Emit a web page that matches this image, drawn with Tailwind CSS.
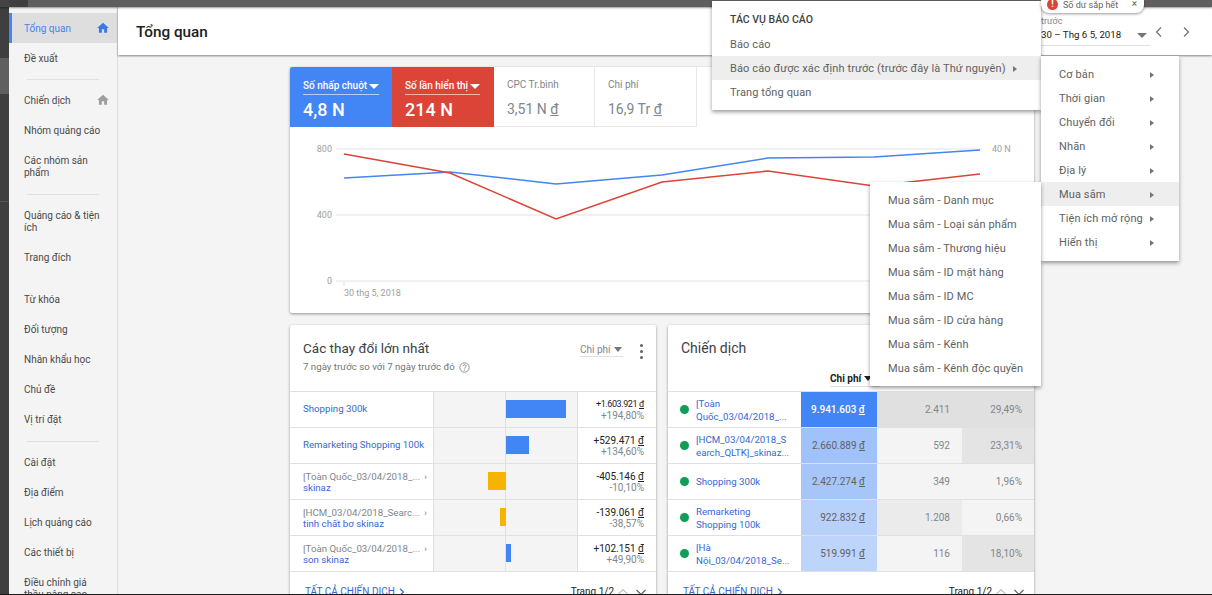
<!doctype html>
<html lang="vi">
<head>
<meta charset="utf-8">
<script src="https://cdn.jsdelivr.net/npm/@tailwindcss/browser@4"></script>
<title>Tổng quan</title>
</head>
<body class="m-0">
<div class="relative w-[1212px] h-[595px] overflow-hidden flex flex-col bg-[#f4f4f4] font-['Roboto',sans-serif] text-[10px] text-[#5f6368]">

  <!-- dark top bar -->
  <div class="h-[7px] shrink-0 flex bg-[#5f5f5f] shadow-[0_1px_2px_rgba(0,0,0,0.4)] z-10">
    <div class="w-[9px] bg-[#444444]"></div>
    <div class="w-[19px] bg-[#3f3f3f]"></div>
  </div>

  <div class="flex flex-1 min-h-0">
    <!-- dark left strip -->
    <div class="w-[9px] shrink-0 bg-[#3f3f3f] flex flex-col">
      <div class="h-[51px]"></div>
      <div class="h-[36px] bg-[#606060]"></div>
      <div class="h-[108px] border-b border-[#555555]"></div>
    </div>

    <!-- nav -->
    <nav class="w-[109px] shrink-0 bg-[#f4f4f4] border-r border-[#dcdcdc] pt-[6px] text-[#4a4a4a] leading-[12px]">
      <div class="h-[30px] flex items-center justify-between pl-[12px] pr-[7px] pt-[2px] bg-[#dedede] border-l-[3px] border-[#4285f4] text-[#4285f4]">
        <span>Tổng quan</span>
        <svg class="w-[14px] h-[14px] -mt-[3px]" viewBox="0 0 24 24" fill="#3b78e7"><path d="M10 20v-6h4v6h5v-8h3L12 3 2 12h3v8z"/></svg>
      </div>
      <div class="h-[30px] flex items-center pl-[15px] pt-[2px]">Đề xuất</div>
      <div class="h-px bg-[#e0e0e0] mt-[6px] mb-[5px] ml-[18px] mr-[18px]"></div>
      <div class="h-[30px] flex items-center justify-between pl-[15px] pr-[7px] pt-[2px]">
        <span>Chiến dịch</span>
        <svg class="w-[14px] h-[14px] -mt-[3px]" viewBox="0 0 24 24" fill="#9e9e9e"><path d="M10 20v-6h4v6h5v-8h3L12 3 2 12h3v8z"/></svg>
      </div>
      <div class="h-[30px] flex items-center pl-[15px] pt-[2px]">Nhóm quảng cáo</div>
      <div class="h-[42px] flex items-center pl-[15px] pt-[2px]">Các nhóm sản<br>phẩm</div>
      <div class="h-px bg-[#e0e0e0] mt-[7px] mb-[5px] ml-[18px] mr-[18px]"></div>
      <div class="h-[42px] flex items-center pl-[15px] pt-[2px]">Quảng cáo &amp; tiện<br>ích</div>
      <div class="h-[30px] flex items-center pl-[15px] pt-[2px] mb-[12px]">Trang đích</div>
      <div class="h-[30px] flex items-center pl-[15px] pt-[2px]">Từ khóa</div>
      <div class="h-[30px] flex items-center pl-[15px] pt-[2px]">Đối tượng</div>
      <div class="h-[30px] flex items-center pl-[15px] pt-[2px]">Nhân khẩu học</div>
      <div class="h-[30px] flex items-center pl-[15px] pt-[2px]">Chủ đề</div>
      <div class="h-[30px] flex items-center pl-[15px] pt-[2px]">Vị trí đặt</div>
      <div class="h-px bg-[#e0e0e0] mt-[7px] mb-[5px] ml-[18px] mr-[18px]"></div>
      <div class="h-[30px] flex items-center pl-[15px] pt-[2px]">Cài đặt</div>
      <div class="h-[30px] flex items-center pl-[15px] pt-[2px]">Địa điểm</div>
      <div class="h-[30px] flex items-center pl-[15px] pt-[2px]">Lịch quảng cáo</div>
      <div class="h-[30px] flex items-center pl-[15px] pt-[2px]">Các thiết bị</div>
      <div class="h-[42px] flex items-center pl-[15px] pt-[2px]">Điều chỉnh giá<br>thầu nâng cao</div>
    </nav>

    <!-- main -->
    <main class="flex-1 min-w-0 flex flex-col">
      <header class="h-[48px] shrink-0 bg-white shadow-[0_1px_2px_rgba(0,0,0,0.45)] flex items-center justify-between pl-[18px] pt-[2px] relative">
        <h1 class="text-[15.3px] font-medium text-[#212121]">Tổng quan</h1>
        <div class="flex items-center self-start pt-[6px] pr-[19px]">
          <div class="w-[109px] h-[31px] border-b border-[#e0e0e0]">
            <div class="text-[9px] leading-[12px] text-[#80868b]">trước</div>
            <div class="flex items-center justify-between leading-[14px] mt-[1px] text-[9.7px] text-[#212121]">
              <span>30 – Thg 6 5, 2018</span>
              <span class="w-0 h-0 border-x-[5px] border-x-transparent border-t-[5px] border-t-[#757575] mr-[3px]"></span>
            </div>
          </div>
          <svg class="w-[14px] h-[14px] ml-[2px] mt-[2px]" viewBox="0 0 14 14" fill="none" stroke="#757575" stroke-width="1.3"><path d="M9 2.5 4.5 7 9 11.5"/></svg>
          <svg class="w-[14px] h-[14px] ml-[13px] mt-[2px]" viewBox="0 0 14 14" fill="none" stroke="#757575" stroke-width="1.3"><path d="M5 2.5 9.500 7 5 11.500"/></svg>
        </div>
      </header>

      <div class="pl-[172px] pt-[12px] w-[916px]">
        <!-- overview card -->
        <section class="w-[744px] h-[246px] bg-white rounded-[2px] shadow-[0_1px_3px_rgba(0,0,0,0.4)] overflow-hidden">
          <div class="flex h-[60px]">
            <div class="w-[102px] bg-[#4285f4] text-white pl-[13px] pt-[11px]">
              <div class="inline-flex items-center gap-[2px] border-b border-white/60 leading-[14px] pb-[1px] font-medium">Số nhấp chuột<span class="w-0 h-0 border-x-[5px] border-x-transparent border-t-[5px] border-t-white"></span></div>
              <div class="text-[18px] leading-[24px] mt-[3px] font-medium">4,8 N</div>
            </div>
            <div class="w-[102px] bg-[#db4437] text-white pl-[13px] pt-[11px]">
              <div class="inline-flex items-center gap-[2px] border-b border-white/60 leading-[14px] pb-[1px] font-medium">Số lần hiển thị<span class="w-0 h-0 border-x-[5px] border-x-transparent border-t-[5px] border-t-white"></span></div>
              <div class="text-[18px] leading-[24px] mt-[3px] font-medium">214 N</div>
            </div>
            <div class="w-[101px] border-r border-b border-[#e8e8e8] pl-[13px] pt-[11px] text-[#80868b]">
              <div class="leading-[14px] pb-[1px]">CPC Tr.bình</div>
              <div class="text-[14px] leading-[24px] mt-[4px]">3,51 N <span class="underline">đ</span></div>
            </div>
            <div class="w-[102px] border-r border-b border-[#e8e8e8] pl-[13px] pt-[11px] text-[#80868b]">
              <div class="leading-[14px] pb-[1px]">Chi phí</div>
              <div class="text-[14px] leading-[24px] mt-[4px]">16,9 Tr <span class="underline">đ</span></div>
            </div>
          </div>
          <svg class="block" width="744" height="186" viewBox="290 127 744 186">
            <g stroke="#f1f1f1" stroke-width="2">
              <line x1="336" y1="149" x2="982" y2="149"/>
              <line x1="336" y1="215" x2="982" y2="215"/>
              <line x1="336" y1="281" x2="982" y2="281"/>
              <line x1="344" y1="281" x2="344" y2="286"/>
            </g>
            <g fill="#9e9e9e" font-size="9" font-family="Roboto, sans-serif">
              <text x="332" y="152" text-anchor="end">800</text>
              <text x="332" y="218" text-anchor="end">400</text>
              <text x="332" y="284" text-anchor="end">0</text>
              <text x="992" y="152">40 N</text>
              <text x="344" y="296">30 thg 5, 2018</text>
            </g>
            <polyline fill="none" stroke="#4285f4" stroke-width="1.5" points="344,178 450,172 556,184 662,175 768,158 874,157 980,150"/>
            <polyline fill="none" stroke="#db4437" stroke-width="1.5" points="344,154 450,173 556,219 662,182 768,171 874,186 980,174"/>
          </svg>
        </section>

        <div class="flex gap-[12px] mt-[12px]">
          <!-- biggest changes -->
          <section class="w-[366px] h-[300px] shrink-0 bg-white rounded-[2px] shadow-[0_1px_3px_rgba(0,0,0,0.4)]">
            <div class="h-[66px] pl-[13px] pr-[11px] pt-[14px] flex justify-between">
              <div>
                <div class="text-[13.5px] leading-[18px] text-[#3c4043]">Các thay đổi lớn nhất</div>
                <div class="mt-[2px] leading-[16px] text-[9.7px] text-[#757575] flex items-center gap-[4px]">7 ngày trước so với 7 ngày trước đó
                  <svg class="w-[11px] h-[11px]" viewBox="0 0 11 11" fill="none" stroke="#757575"><circle cx="5.500" cy="5.500" r="4.700" stroke-width=".8"/><path d="M4 4.200c.2-2 3.200-2 3.200-.1 0 1-1.600 1.200-1.600 2.500" stroke-width=".8"/><circle cx="5.600" cy="8.100" r=".3" stroke-width=".6"/></svg>
                </div>
              </div>
              <div class="flex items-start gap-[17px] pt-[4px]">
                <div class="flex items-center gap-[3px] h-[14px] w-[43px] border-b border-[#e0e0e0] text-[#80868b]">Chi phí<span class="w-0 h-0 border-x-[4px] border-x-transparent border-t-[5px] border-t-[#757575]"></span></div>
                <div class="flex flex-col gap-[3px] pt-[1px] pr-[2px]">
                  <span class="w-[3px] h-[3px] rounded-full bg-[#616161]"></span>
                  <span class="w-[3px] h-[3px] rounded-full bg-[#616161]"></span>
                  <span class="w-[3px] h-[3px] rounded-full bg-[#616161]"></span>
                </div>
              </div>
            </div>
            <!-- rows -->
            <div class="flex h-[36px] border-t border-[#e0e0e0]">
              <div class="w-[143px] flex items-center pl-[13px] text-[9.7px] text-[#3367d6]">Shopping 300k</div>
              <div class="w-[145px] bg-[#f4f4f4] border-x border-[#e0e0e0] flex"><div class="w-[72px] h-full border-r border-[#e0e0e0]"></div><div class="w-[60px] h-[18px] mt-[8px] bg-[#4285f4]"></div></div>
              <div class="w-[78px] flex flex-col justify-center items-end pr-[12px] leading-[11px]"><span class="text-[9px] tracking-[-0.4px] text-[#212121]">+1.603.921 <span class="underline">đ</span></span><span class="text-[#80868b]">+194,80%</span></div>
            </div>
            <div class="flex h-[36px] border-t border-[#e0e0e0]">
              <div class="w-[143px] flex items-center pl-[13px] text-[9.7px] whitespace-nowrap text-[#3367d6]">Remarketing Shopping 100k</div>
              <div class="w-[145px] bg-[#f4f4f4] border-x border-[#e0e0e0] flex"><div class="w-[72px] h-full border-r border-[#e0e0e0]"></div><div class="w-[23px] h-[18px] mt-[8px] bg-[#4285f4]"></div></div>
              <div class="w-[78px] flex flex-col justify-center items-end pr-[12px] leading-[11px]"><span class="text-[#212121]">+529.471 <span class="underline">đ</span></span><span class="text-[#80868b]">+134,60%</span></div>
            </div>
            <div class="flex h-[36px] border-t border-[#e0e0e0]">
              <div class="w-[143px] flex flex-col justify-center pl-[13px] text-[9.7px] leading-[11px] whitespace-nowrap text-[#3367d6]"><div class="flex justify-between pr-[6px] text-[#80868b]"><span>[Toàn Quốc_03/04/2018_...</span><span>›</span></div><span>skinaz</span></div>
              <div class="w-[145px] bg-[#f4f4f4] border-x border-[#e0e0e0] flex justify-start"><div class="w-[72px] h-full border-r border-[#e0e0e0] flex justify-end"><div class="w-[18px] h-[18px] mt-[8px] -mr-px bg-[#f4b400]"></div></div></div>
              <div class="w-[78px] flex flex-col justify-center items-end pr-[12px] leading-[11px]"><span class="text-[#212121]">-405.146 <span class="underline">đ</span></span><span class="text-[#80868b]">-10,10%</span></div>
            </div>
            <div class="flex h-[36px] border-t border-[#e0e0e0]">
              <div class="w-[143px] flex flex-col justify-center pl-[13px] text-[9.7px] leading-[11px] whitespace-nowrap text-[#3367d6]"><div class="flex justify-between pr-[6px] text-[#80868b]"><span>[HCM_03/04/2018_Searc...</span><span>›</span></div><span>tinh chất bơ skinaz</span></div>
              <div class="w-[145px] bg-[#f4f4f4] border-x border-[#e0e0e0] flex"><div class="w-[72px] h-full border-r border-[#e0e0e0] flex justify-end"><div class="w-[6px] h-[18px] mt-[8px] -mr-px bg-[#f4b400]"></div></div></div>
              <div class="w-[78px] flex flex-col justify-center items-end pr-[12px] leading-[11px]"><span class="text-[#212121]">-139.061 <span class="underline">đ</span></span><span class="text-[#80868b]">-38,57%</span></div>
            </div>
            <div class="flex h-[36px] border-t border-[#e0e0e0]">
              <div class="w-[143px] flex flex-col justify-center pl-[13px] text-[9.7px] leading-[11px] whitespace-nowrap text-[#3367d6]"><div class="flex justify-between pr-[6px] text-[#80868b]"><span>[Toàn Quốc_03/04/2018_...</span><span>›</span></div><span>son skinaz</span></div>
              <div class="w-[145px] bg-[#f4f4f4] border-x border-[#e0e0e0] flex"><div class="w-[72px] h-full border-r border-[#e0e0e0]"></div><div class="w-[5px] h-[18px] mt-[8px] bg-[#4285f4]"></div></div>
              <div class="w-[78px] flex flex-col justify-center items-end pr-[12px] leading-[11px]"><span class="text-[#212121]">+102.151 <span class="underline">đ</span></span><span class="text-[#80868b]">+49,90%</span></div>
            </div>
            <div class="flex items-start justify-between h-[36px] border-t border-[#e0e0e0] pl-[15px] pr-[9px] pt-[12px]">
              <div class="flex items-center gap-[3px] text-[#3367d6]"><span>TẤT CẢ CHIẾN DỊCH</span><svg class="w-[8px] h-[8px]" viewBox="0 0 8 8" fill="none" stroke="#3367d6" stroke-width="1.200"><path d="M2 .8 5.500 4 2 7.200"/></svg></div>
              <div class="flex items-center text-[#212121]"><span>Trang 1/2</span><svg class="w-[12px] h-[12px] ml-[3px]" viewBox="0 0 12 12" fill="none" stroke="#c4c4c4" stroke-width="1.200"><path d="M1.500 8 6 3.500 10.500 8"/></svg><svg class="w-[12px] h-[12px] ml-[6px]" viewBox="0 0 12 12" fill="none" stroke="#616161" stroke-width="1.200"><path d="M1.500 4 6 8.500 10.500 4"/></svg></div>
            </div>
          </section>

          <!-- campaigns -->
          <section class="w-[366px] h-[300px] shrink-0 bg-white rounded-[2px] shadow-[0_1px_3px_rgba(0,0,0,0.4)]">
            <div class="h-[66px] pl-[13px] pt-[14px] relative">
              <div class="text-[14px] leading-[18px] text-[#3c4043]">Chiến dịch</div>
              <div class="flex items-center gap-[3px] mt-[14px] ml-[149px] w-[50px] h-[16px] border-b border-[#e0e0e0] text-[#212121] font-bold">Chi phí<span class="w-0 h-0 border-x-[4px] border-x-transparent border-t-[5px] border-t-[#212121]"></span></div>
            </div>
            <div class="flex h-[36px] border-t border-[#e0e0e0]">
              <div class="w-[133px] flex items-center pl-[12px] gap-[7px] text-[9.7px] leading-[13px] whitespace-nowrap text-[#3367d6]"><span class="w-[9px] h-[9px] rounded-full bg-[#0f9d58] shrink-0"></span><span>[Toàn<br>Quốc_03/04/2018_...</span></div>
              <div class="w-[76px] flex items-center justify-end pr-[12px] bg-[#4285f4] text-white font-medium">9.941.603&nbsp;<span class="underline">đ</span></div>
              <div class="w-[85px] flex items-center justify-end pr-[12px] bg-[#e0e0e0] text-[#80868b]">2.411</div>
              <div class="w-[72px] flex items-center justify-end pr-[12px] bg-[#e0e0e0] text-[#80868b]">29,49%</div>
            </div>
            <div class="flex h-[36px] border-t border-[#e0e0e0]">
              <div class="w-[133px] flex items-center pl-[12px] gap-[7px] text-[9.7px] leading-[13px] whitespace-nowrap text-[#3367d6]"><span class="w-[9px] h-[9px] rounded-full bg-[#0f9d58] shrink-0"></span><span>[HCM_03/04/2018_S<br>earch_QLTK]_skinaz...</span></div>
              <div class="w-[76px] flex items-center justify-end pr-[12px] bg-[#a0c2fa] text-[#616161]">2.660.889&nbsp;<span class="underline">đ</span></div>
              <div class="w-[85px] flex items-center justify-end pr-[12px] bg-[#f4f4f4] text-[#80868b]">592</div>
              <div class="w-[72px] flex items-center justify-end pr-[12px] bg-[#e4e4e4] text-[#80868b]">23,31%</div>
            </div>
            <div class="flex h-[36px] border-t border-[#e0e0e0]">
              <div class="w-[133px] flex items-center pl-[12px] gap-[7px] text-[9.7px] leading-[13px] whitespace-nowrap text-[#3367d6]"><span class="w-[9px] h-[9px] rounded-full bg-[#0f9d58] shrink-0"></span><span>Shopping 300k</span></div>
              <div class="w-[76px] flex items-center justify-end pr-[12px] bg-[#a6c6fa] text-[#616161]">2.427.274&nbsp;<span class="underline">đ</span></div>
              <div class="w-[85px] flex items-center justify-end pr-[12px] bg-[#f4f4f4] text-[#80868b]">349</div>
              <div class="w-[72px] flex items-center justify-end pr-[12px] bg-[#f4f4f4] text-[#80868b]">1,96%</div>
            </div>
            <div class="flex h-[36px] border-t border-[#e0e0e0]">
              <div class="w-[133px] flex items-center pl-[12px] gap-[7px] text-[9.7px] leading-[13px] whitespace-nowrap text-[#3367d6]"><span class="w-[9px] h-[9px] rounded-full bg-[#0f9d58] shrink-0"></span><span>Remarketing<br>Shopping 100k</span></div>
              <div class="w-[76px] flex items-center justify-end pr-[12px] bg-[#b8d1fb] text-[#616161]">922.832&nbsp;<span class="underline">đ</span></div>
              <div class="w-[85px] flex items-center justify-end pr-[12px] bg-[#ebebeb] text-[#80868b]">1.208</div>
              <div class="w-[72px] flex items-center justify-end pr-[12px] bg-[#f4f4f4] text-[#80868b]">0,66%</div>
            </div>
            <div class="flex h-[36px] border-t border-[#e0e0e0]">
              <div class="w-[133px] flex items-center pl-[12px] gap-[7px] text-[9.7px] leading-[13px] whitespace-nowrap text-[#3367d6]"><span class="w-[9px] h-[9px] rounded-full bg-[#0f9d58] shrink-0"></span><span>[Hà<br>Nội_03/04/2018_Se...</span></div>
              <div class="w-[76px] flex items-center justify-end pr-[12px] bg-[#bdd4fb] text-[#616161]">519.991&nbsp;<span class="underline">đ</span></div>
              <div class="w-[85px] flex items-center justify-end pr-[12px] bg-[#f4f4f4] text-[#80868b]">116</div>
              <div class="w-[72px] flex items-center justify-end pr-[12px] bg-[#e4e4e4] text-[#80868b]">18,10%</div>
            </div>
            <div class="flex items-start justify-between h-[36px] border-t border-[#e0e0e0] pl-[15px] pr-[9px] pt-[12px]">
              <div class="flex items-center gap-[3px] text-[#3367d6]"><span>TẤT CẢ CHIẾN DỊCH</span><svg class="w-[8px] h-[8px]" viewBox="0 0 8 8" fill="none" stroke="#3367d6" stroke-width="1.200"><path d="M2 .8 5.500 4 2 7.200"/></svg></div>
              <div class="flex items-center text-[#212121]"><span>Trang 1/2</span><svg class="w-[12px] h-[12px] ml-[3px]" viewBox="0 0 12 12" fill="none" stroke="#c4c4c4" stroke-width="1.200"><path d="M1.500 8 6 3.500 10.500 8"/></svg><svg class="w-[12px] h-[12px] ml-[6px]" viewBox="0 0 12 12" fill="none" stroke="#616161" stroke-width="1.200"><path d="M1.500 4 6 8.500 10.500 4"/></svg></div>
            </div>
          </section>
        </div>
      </div>
    </main>
  </div>

  <!-- notification pill -->
  <div class="absolute left-[1041px] top-0 w-[103px] h-[13px] z-30 bg-white rounded-b-[8px] shadow-[0_1px_3px_rgba(0,0,0,0.4)] flex items-start justify-between pl-[6px] pr-[7px] text-[9px] text-[#5f6368] leading-[10px]">
    <div class="flex items-center gap-[5px]">
      <span class="w-[11px] h-[11px] -mt-[2px] rounded-full bg-[#db4437] text-white font-bold text-[9px] leading-[11px] text-center">!</span>
      <span>Số dư sắp hết</span>
    </div>
    <span class="text-[10px] leading-[8px]">×</span>
  </div>

  <!-- report menu -->
  <div class="absolute left-[712px] top-[1px] w-[329px] h-[109px] z-20 bg-white shadow-[0_2px_4px_rgba(0,0,0,0.4)] text-[11px] tracking-[0.12px] text-[#616161] pt-[7px]">
    <div class="h-[24px] flex items-center pl-[18px] font-medium text-[10.5px] tracking-normal text-[#424242]">TÁC VỤ BÁO CÁO</div>
    <div class="h-[24px] flex items-center pl-[18px] pt-[2px]">Báo cáo</div>
    <div class="h-[24px] flex items-center pl-[18px] pt-[2px] gap-[7px] bg-[#eeeeee]">Báo cáo được xác định trước (trước đây là Thứ nguyên)<span class="w-0 h-0 border-y-[3.5px] border-y-transparent border-l-[4px] border-l-[#757575]"></span></div>
    <div class="h-[24px] flex items-center pl-[18px] pt-[2px]">Trang tổng quan</div>
  </div>

  <!-- submenu -->
  <div class="absolute left-[1041px] top-[56px] w-[138px] h-[205px] z-20 bg-white shadow-[0_2px_4px_rgba(0,0,0,0.4)] text-[11px] tracking-[0.12px] text-[#616161] pt-[6px]">
    <div class="h-[24px] flex items-center justify-between pl-[18px] pr-[25px] pt-[2px]">Cơ bản<span class="w-0 h-0 border-y-[3.5px] border-y-transparent border-l-[4px] border-l-[#757575]"></span></div>
    <div class="h-[24px] flex items-center justify-between pl-[18px] pr-[25px] pt-[2px]">Thời gian<span class="w-0 h-0 border-y-[3.5px] border-y-transparent border-l-[4px] border-l-[#757575]"></span></div>
    <div class="h-[24px] flex items-center justify-between pl-[18px] pr-[25px] pt-[2px]">Chuyển đổi<span class="w-0 h-0 border-y-[3.5px] border-y-transparent border-l-[4px] border-l-[#757575]"></span></div>
    <div class="h-[24px] flex items-center justify-between pl-[18px] pr-[25px] pt-[2px]">Nhãn<span class="w-0 h-0 border-y-[3.5px] border-y-transparent border-l-[4px] border-l-[#757575]"></span></div>
    <div class="h-[24px] flex items-center justify-between pl-[18px] pr-[25px] pt-[2px]">Địa lý<span class="w-0 h-0 border-y-[3.5px] border-y-transparent border-l-[4px] border-l-[#757575]"></span></div>
    <div class="h-[24px] flex items-center justify-between pl-[18px] pr-[25px] pt-[2px] bg-[#eeeeee]">Mua sắm<span class="w-0 h-0 border-y-[3.5px] border-y-transparent border-l-[4px] border-l-[#757575]"></span></div>
    <div class="h-[24px] flex items-center justify-between pl-[18px] pr-[25px] pt-[2px]">Tiện ích mở rộng<span class="w-0 h-0 border-y-[3.5px] border-y-transparent border-l-[4px] border-l-[#757575]"></span></div>
    <div class="h-[24px] flex items-center justify-between pl-[18px] pr-[25px] pt-[2px]">Hiển thị<span class="w-0 h-0 border-y-[3.5px] border-y-transparent border-l-[4px] border-l-[#757575]"></span></div>
  </div>

  <!-- shopping submenu -->
  <div class="absolute left-[870px] top-[182px] w-[171px] h-[204px] z-20 bg-white shadow-[0_2px_4px_rgba(0,0,0,0.4)] text-[11px] tracking-[0.12px] text-[#616161] pt-[6px] pl-[18px]">
    <div class="h-[24px] flex items-center pt-[2px]">Mua sắm - Danh mục</div>
    <div class="h-[24px] flex items-center pt-[2px]">Mua sắm - Loại sản phẩm</div>
    <div class="h-[24px] flex items-center pt-[2px]">Mua sắm - Thương hiệu</div>
    <div class="h-[24px] flex items-center pt-[2px]">Mua sắm - ID mặt hàng</div>
    <div class="h-[24px] flex items-center pt-[2px]">Mua sắm - ID MC</div>
    <div class="h-[24px] flex items-center pt-[2px]">Mua sắm - ID cửa hàng</div>
    <div class="h-[24px] flex items-center pt-[2px]">Mua sắm - Kênh</div>
    <div class="h-[24px] flex items-center pt-[2px]">Mua sắm - Kênh độc quyền</div>
  </div>

  <!-- bottom edge of the capture -->
  <div class="absolute left-0 bottom-0 w-full h-px bg-[#1a1a1a] z-40"></div>
</div>
</body>
</html>
